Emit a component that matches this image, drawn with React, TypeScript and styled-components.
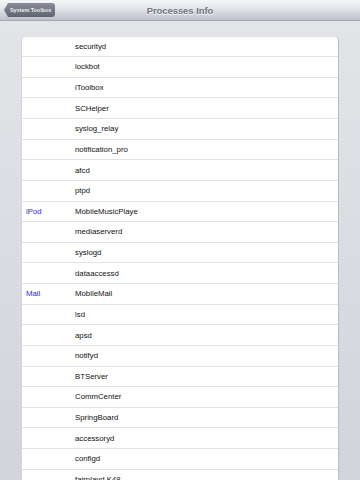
import React, { FC } from "react";
import styled, { createGlobalStyle } from "styled-components";

type Process = { app?: string; name: string };

const processes: Process[] = [
  { name: "securityd" },
  { name: "lockbot" },
  { name: "iToolbox" },
  { name: "SCHelper" },
  { name: "syslog_relay" },
  { name: "notification_pro" },
  { name: "afcd" },
  { name: "ptpd" },
  { app: "iPod", name: "MobileMusicPlaye" },
  { name: "mediaserverd" },
  { name: "syslogd" },
  { name: "dataaccessd" },
  { app: "Mail", name: "MobileMail" },
  { name: "lsd" },
  { name: "apsd" },
  { name: "notifyd" },
  { name: "BTServer" },
  { name: "CommCenter" },
  { name: "SpringBoard" },
  { name: "accessoryd" },
  { name: "configd" },
  { name: "fairplayd.K48" },
];

const GlobalStyle = createGlobalStyle`
  html, body {
    margin: 0;
    padding: 0;
  }
  body {
    font-family: "Liberation Sans", Arial, sans-serif;
  }
`;

const App: FC = () => {
  return (
    <>
      <GlobalStyle />
      <Screen>
        <NavBar>
          <BackButton>System Toolbox</BackButton>
          <NavTitle>Processes Info</NavTitle>
        </NavBar>
        <Content>
          <Card>
            {processes.map((p, i) => (
              <Row key={i} last={i === processes.length - 1}>
                <AppLabel>{p.app}</AppLabel>
                <ProcName>{p.name}</ProcName>
              </Row>
            ))}
          </Card>
        </Content>
      </Screen>
    </>
  );
};

export default App;

const Screen = styled.div`
  width: 360px;
  height: 480px;
  overflow: hidden;
  display: flex;
  flex-direction: column;
  background: linear-gradient(#e3e5e9, #d1d4d9);
`;

const NavBar = styled.div`
  position: relative;
  height: 21px;
  flex-shrink: 0;
  display: flex;
  align-items: center;
  justify-content: center;
  background: linear-gradient(#f6f7f9 0%, #dfe1e6 50%, #bcc0c9 100%);
  border-bottom: 1px solid #a3a8b3;
  box-sizing: border-box;
`;

const BackButton = styled.div`
  position: absolute;
  left: 4px;
  top: 3px;
  height: 14px;
  padding: 0 4px 0 6px;
  display: flex;
  align-items: center;
  background: linear-gradient(#8a8f9a, #5e6470);
  border-radius: 0 3px 3px 0;
  clip-path: polygon(4px 0, 100% 0, 100% 100%, 4px 100%, 0 50%);
  color: #ffffff;
  font-size: 5.4px;
  font-weight: bold;
  text-shadow: 0 -0.5px 0 #3e434c;
`;

const NavTitle = styled.div`
  margin-top: 1px;
  font-size: 9.4px;
  font-weight: bold;
  color: #6f737c;
  text-shadow: 0 0.5px 0 #ffffff;
`;

const Content = styled.div`
  flex: 1;
  padding: 14.5px 21px 0 21px;
`;

const Card = styled.div`
  background: #ffffff;
  border-radius: 5px 5px 0 0;
  border-left: 1px solid #d4d7dc;
  border-right: 1.5px solid #b9bdc4;
  border-top: 1px solid #dcdfe3;
`;

const Row = styled.div<{ last?: boolean }>`
  height: 20.625px;
  box-sizing: border-box;
  display: flex;
  align-items: center;
  border-bottom: ${(p) => (p.last ? "none" : "1px solid #e2e2e2")};
  font-size: 7.8px;
`;

const AppLabel = styled.div`
  width: 49px;
  padding-left: 4px;
  color: #2a2ad6;
`;

const ProcName = styled.div`
  color: #111111;
`;
